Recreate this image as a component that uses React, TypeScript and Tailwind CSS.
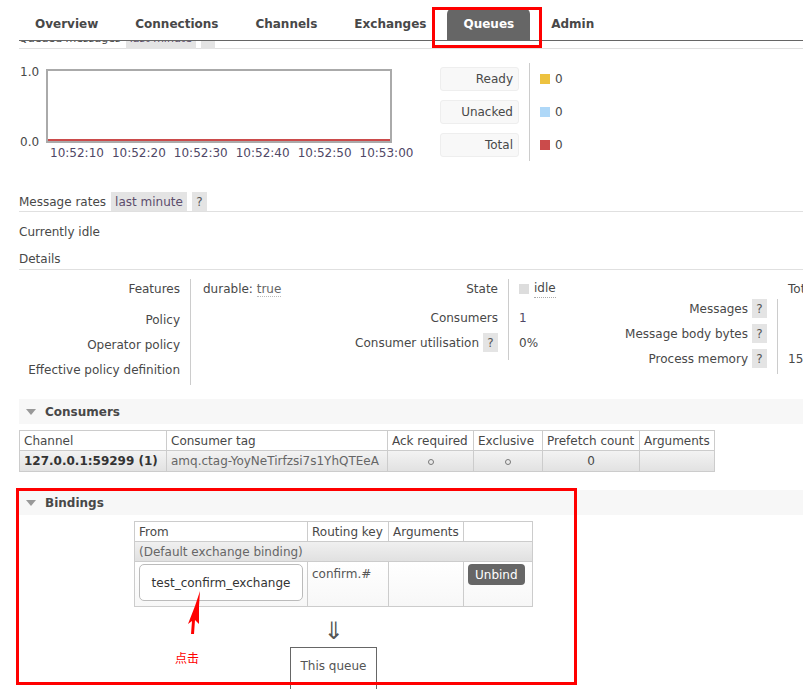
import React from 'react';

const tabs = ['Overview', 'Connections', 'Channels', 'Exchanges', 'Queues', 'Admin'];
const times = ['10:52:10', '10:52:20', '10:52:30', '10:52:40', '10:52:50', '10:53:00'];

function Help() {
  return (
    <span className="inline-flex w-[15px] h-[19px] items-center justify-center bg-[#e4e4e4] text-[#555]">?</span>
  );
}

function Circle() {
  return <span className="inline-block w-[6px] h-[6px] rounded-full border border-[#777]" />;
}

function SectionHeader({ title }: { title: string }) {
  return (
    <div className="flex items-center h-[25px] bg-[#f7f7f7] pl-[7px]">
      <svg width="10" height="6" viewBox="0 0 10 6" className="mr-[9px]">
        <polygon points="0,0 10,0 5,6" fill="#999" />
      </svg>
      <span className="font-bold text-[12px] text-[#484848]">{title}</span>
    </div>
  );
}

export default function App() {
  return (
    <div className="relative w-[803px] h-[689px] overflow-hidden bg-white font-['DejaVu_Sans',sans-serif] text-[12px] text-[#484848]">
      {/* page content (scrolled under the fixed nav) */}
      <div className="pl-[19px] pt-[30px] w-[1000px]">
        {/* queued messages header */}
        <div className="flex items-center h-[19px] border-b border-[#e0e0e0] gap-[5px] text-[11px]">
          <span>Queued messages</span>
          <span className="h-[19px] px-[4px] bg-[#e4e4e4] flex items-center text-[#5c4d6c]">last minute</span>
          <span className="h-[19px] w-[14px] bg-[#e4e4e4]" />
        </div>

        {/* chart + legend */}
        <div className="flex mt-[14px]">
          <div className="w-[421px] pt-[6px]">
            <div className="flex">
              <div className="relative w-[27px] h-[73px]">
                <span className="absolute left-[1px] top-[-4px] leading-[14px]">1.0</span>
                <span className="absolute left-[1px] bottom-[-7px] leading-[14px]">0.0</span>
              </div>
              <div className="w-[346px] h-[74px] border-2 border-[#aaa] flex flex-col justify-end">
                <div className="h-[2px] bg-[#cb4b4b]" />
              </div>
            </div>
            <div className="flex gap-[8px] pl-[31px] mt-[3px] leading-[14px] text-[#4f4766]">
              {times.map((t) => (
                <span key={t}>{t}</span>
              ))}
            </div>
          </div>
          <div className="flex">
            <div className="flex flex-col gap-[9px] py-[4px] pr-[10px] border-r border-[#ccc]">
              {['Ready', 'Unacked', 'Total'].map((l) => (
                <div key={l} className="w-[79px] h-[24px] bg-[#f8f8f8] border border-[#eee] rounded-[3px] flex items-center justify-end pr-[5px]">
                  {l}
                </div>
              ))}
            </div>
            <div className="flex flex-col gap-[9px] py-[4px] pl-[10px]">
              {['bg-[#edc240]', 'bg-[#afd8f8]', 'bg-[#cb4b4b]'].map((c) => (
                <div key={c} className="h-[24px] flex items-center gap-[5px]">
                  <span className={`w-[10px] h-[10px] ${c}`} />
                  <span>0</span>
                </div>
              ))}
            </div>
          </div>
        </div>

        {/* message rates */}
        <div className="flex items-center h-[20px] border-b border-[#e0e0e0] gap-[5px] mt-[31px]">
          <span>Message rates</span>
          <span className="h-[19px] px-[4px] bg-[#e4e4e4] flex items-center text-[#5c4d6c]">last minute</span>
          <Help />
        </div>
        <div className="mt-[13px] leading-[14px]">Currently idle</div>
        <div className="mt-[10px] h-[21px] leading-[20px] border-b border-[#e0e0e0]">Details</div>

        {/* details */}
        <div className="flex mt-[9px]">
          <div className="flex">
            <div className="w-[172px] border-r border-[#ccc] pr-[10px] text-right leading-[20px]">
              <div className="h-[31px]">Features</div>
              <div className="h-[25px]">Policy</div>
              <div className="h-[25px]">Operator policy</div>
              <div className="h-[25px]">Effective policy definition</div>
            </div>
            <div className="w-[109px] pl-[12px] leading-[20px]">
              <div className="h-[31px]">
                durable: <span className="text-[#666] border-b border-dotted border-[#bbb]">true</span>
              </div>
            </div>
          </div>
          <div className="flex self-start">
            <div className="w-[209px] border-r border-[#ccc] pr-[10px] text-right leading-[20px]">
              <div className="h-[29px]">State</div>
              <div className="h-[25px]">Consumers</div>
              <div className="h-[27px] flex justify-end items-start gap-[4px]">
                <span>Consumer utilisation</span>
                <Help />
              </div>
            </div>
            <div className="w-[91px] pl-[10px] leading-[20px]">
              <div className="h-[29px] flex items-start">
                <span className="w-[10px] h-[10px] bg-[#ddd] mt-[5px] mr-[5px]" />
                <span className="border-b border-dotted border-[#aaa] leading-[18px]">idle</span>
              </div>
              <div className="h-[25px] text-[#4f4766]">1</div>
              <div className="h-[27px]">0%</div>
            </div>
          </div>
          <div className="flex flex-col self-start">
            <div className="h-[20px] leading-[20px] pl-[188px]">Total</div>
            <div className="flex">
              <div className="w-[178px] border-r border-[#ccc] pr-[10px] leading-[20px]">
                {['Messages', 'Message body bytes', 'Process memory'].map((l) => (
                  <div key={l} className="h-[25px] flex justify-end items-start gap-[4px]">
                    <span>{l}</span>
                    <Help />
                  </div>
                ))}
              </div>
              <div className="pl-[10px] leading-[20px]">
                <div className="h-[25px]" />
                <div className="h-[25px]" />
                <div className="h-[25px]">15</div>
              </div>
            </div>
          </div>
        </div>

        {/* consumers */}
        <div className="mt-[14px]">
          <SectionHeader title="Consumers" />
        </div>
        <table className="mt-[6px] border-collapse">
          <thead>
            <tr className="h-[20px] text-left">
              <th className="w-[147px] border border-[#ccc] px-[4px] font-normal">Channel</th>
              <th className="w-[221px] border border-[#ccc] px-[4px] font-normal">Consumer tag</th>
              <th className="w-[86px] border border-[#ccc] px-[4px] font-normal">Ack required</th>
              <th className="w-[69px] border border-[#ccc] px-[4px] font-normal">Exclusive</th>
              <th className="w-[97px] border border-[#ccc] px-[4px] font-normal">Prefetch count</th>
              <th className="w-[75px] border border-[#ccc] px-[4px] font-normal">Arguments</th>
            </tr>
          </thead>
          <tbody>
            <tr className="h-[21px] bg-linear-to-b from-[#f3f3f3] to-[#e1e1e1]">
              <td className="border border-[#ccc] px-[4px] font-bold text-[#333]">127.0.0.1:59299 (1)</td>
              <td className="border border-[#ccc] px-[4px] text-[#666]">amq.ctag-YoyNeTirfzsi7s1YhQTEeA</td>
              <td className="border border-[#ccc] text-center"><Circle /></td>
              <td className="border border-[#ccc] text-center"><Circle /></td>
              <td className="border border-[#ccc] text-center">0</td>
              <td className="border border-[#ccc]" />
            </tr>
          </tbody>
        </table>

        {/* bindings */}
        <div className="mt-[18px]">
          <SectionHeader title="Bindings" />
        </div>
        <div className="ml-[115px] w-[399px] mt-[6px] flex flex-col items-center">
          <table className="border-collapse w-[399px]">
            <thead>
              <tr className="h-[20px] text-left">
                <th className="w-[173px] border border-[#ccc] px-[4px] font-normal">From</th>
                <th className="w-[81px] border border-[#ccc] px-[4px] font-normal">Routing key</th>
                <th className="w-[75px] border border-[#ccc] px-[4px] font-normal">Arguments</th>
                <th className="w-[69px] border border-[#ccc]" />
              </tr>
            </thead>
            <tbody>
              <tr className="h-[20px] bg-linear-to-b from-[#f0f0f0] to-[#e0e0e0]">
                <td colSpan={4} className="border border-[#ccc] px-[4px] text-[#666]">(Default exchange binding)</td>
              </tr>
              <tr className="h-[45px] bg-linear-to-b from-white to-[#f7f7f7] align-top">
                <td className="border border-[#ccc] px-[4px] pt-[2px]">
                  <div className="w-[164px] h-[37px] border border-[#bbb] rounded-[5px] bg-white flex items-center justify-center text-[#333]">
                    test_confirm_exchange
                  </div>
                </td>
                <td className="border border-[#ccc] px-[4px] pt-[3px] text-[#555]">confirm.#</td>
                <td className="border border-[#ccc]" />
                <td className="border border-[#ccc] pl-[4px] pt-[2px]">
                  <span className="inline-flex h-[21px] px-[7px] items-center rounded-[4px] bg-[#666] text-white">Unbind</span>
                </td>
              </tr>
            </tbody>
          </table>
          <div className="mt-[14px] text-[24px] leading-[20px] text-[#555]">⇓</div>
          <div className="mt-[6px] w-[87px] h-[50px] border border-[#666] border-b-0 flex justify-center pt-[9px] text-[#555]">
            This queue
          </div>
        </div>
      </div>

      {/* fixed nav over content */}
      <div className="absolute top-0 left-0 right-0 bg-white">
        <div className="ml-[19px] h-[41px] border-b border-[#666] flex items-end gap-[5px]">
          {tabs.map((t) => (
            <div
              key={t}
              className={
                t === 'Queues'
                  ? 'h-[32px] px-[16px] leading-[33px] font-bold rounded-t-[6px] bg-[#666] text-white'
                  : 'h-[32px] px-[16px] leading-[33px] font-bold text-[#484848]'
              }
            >
              {t}
            </div>
          ))}
        </div>
      </div>

      {/* annotations */}
      <div className="absolute left-[432px] top-[7px] w-[110px] h-[41px] border-[3px] border-[#ff0000]" />
      <div className="absolute left-[16px] top-[488px] w-[561px] h-[197px] border-[3px] border-[#ff0000]" />
      <svg className="absolute left-[185px] top-[588px]" width="20" height="50" viewBox="185 588 20 50">
        <polygon points="200,591 199,606 199,624 195,620 194,634 191,634 192,621 188,624 195,606" fill="#ff0000" />
      </svg>
      <div className="absolute left-[175px] top-[650px] text-[12px] leading-[16px] text-[#ff0000] font-['Noto_Sans_CJK_SC',sans-serif]">
        点击
      </div>
    </div>
  );
}
